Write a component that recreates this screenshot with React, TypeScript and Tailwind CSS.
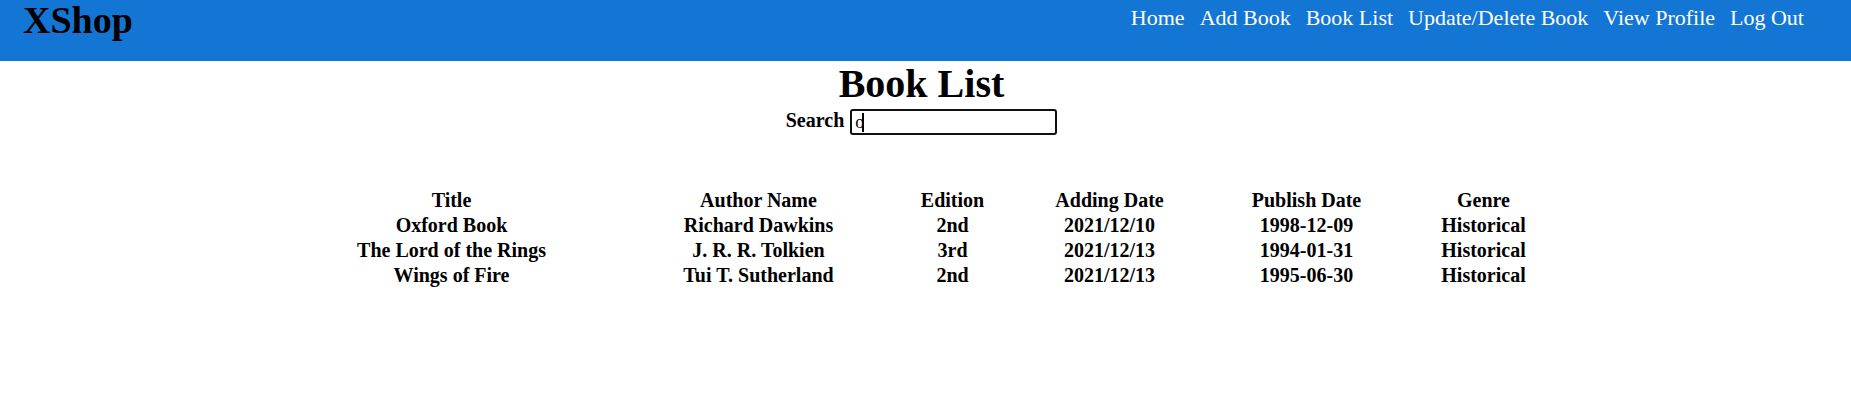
import React from 'react';

const navLinks = ['Home', 'Add Book', 'Book List', 'Update/Delete Book', 'View Profile', 'Log Out'];

interface Book {
  title: string;
  author: string;
  edition: string;
  addedOn: string;
  publishedOn: string;
  genre: string;
}

const books: Book[] = [
  { title: 'Oxford Book', author: 'Richard Dawkins', edition: '2nd', addedOn: '2021/12/10', publishedOn: '1998-12-09', genre: 'Historical' },
  { title: 'The Lord of the Rings', author: 'J. R. R. Tolkien', edition: '3rd', addedOn: '2021/12/13', publishedOn: '1994-01-31', genre: 'Historical' },
  { title: 'Wings of Fire', author: 'Tui T. Sutherland', edition: '2nd', addedOn: '2021/12/13', publishedOn: '1995-06-30', genre: 'Historical' },
];

const headers = ['Title', 'Author Name', 'Edition', 'Adding Date', 'Publish Date', 'Genre'];

export default function App() {
  return (
    <div className="min-h-[409px] bg-white text-black font-['Liberation_Serif',serif]">
      <header className="flex h-[61px] items-start justify-between bg-[#1476d4] pl-[23px] pr-[47px]">
        <h1 className="text-[38px] font-bold leading-[41px]">XShop</h1>
        <nav className="flex gap-[15px] pt-[5px]">
          {navLinks.map((link) => (
            <a key={link} href="#" className="text-[22px] leading-[25px] text-white">
              {link}
            </a>
          ))}
        </nav>
      </header>

      <main>
        <div className="pr-2">
          <h2 className="text-center text-[40px] font-bold leading-[46px]">Book List</h2>
          <div className="mt-[2px] flex items-start justify-center gap-[6px]">
            <label htmlFor="search" className="text-[20px] font-bold leading-[23px]">
              Search
            </label>
            <div className="relative">
              <input
                id="search"
                type="text"
                defaultValue="o"
                className="h-[26px] w-[207px] rounded-[3px] border-2 border-[#111] pl-[3px] text-[18px] font-['Liberation_Serif',serif] outline-none"
              />
              <span className="absolute left-[12px] top-[4px] h-[19px] w-[2px] bg-black" />
            </div>
          </div>
        </div>

        <div className="mt-[53px] ml-[288px] grid grid-cols-[327px_287px_101px_213px_181px_173px] text-center text-[20px] font-bold leading-[25px]">
          {headers.map((h) => (
            <div key={h}>{h}</div>
          ))}
          {books.map((book) => (
            <React.Fragment key={book.title}>
              <div>{book.title}</div>
              <div>{book.author}</div>
              <div>{book.edition}</div>
              <div>{book.addedOn}</div>
              <div>{book.publishedOn}</div>
              <div>{book.genre}</div>
            </React.Fragment>
          ))}
        </div>
      </main>
    </div>
  );
}
